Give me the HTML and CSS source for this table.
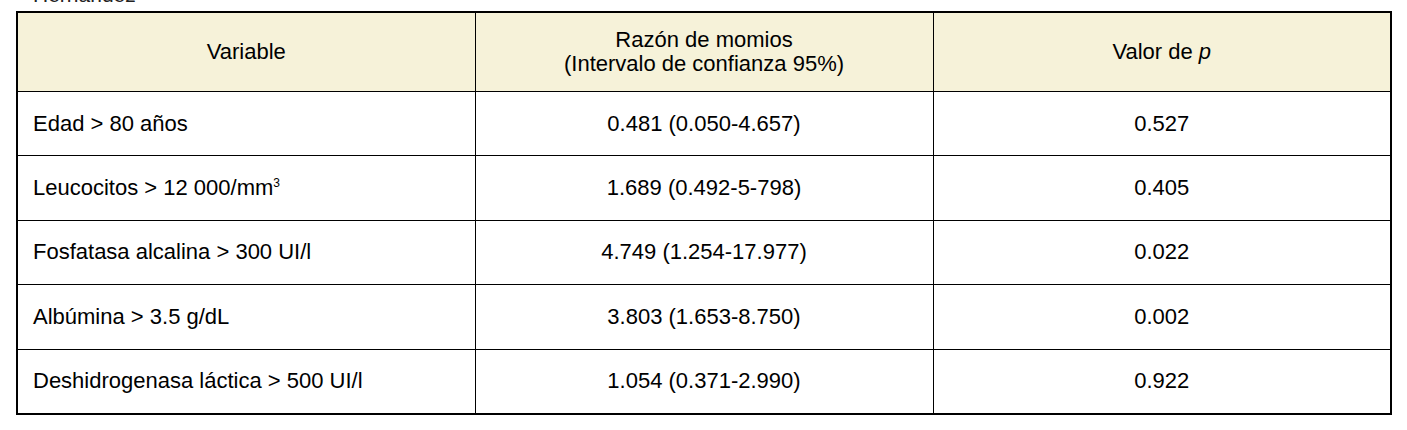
FILE: index.html
```html
<!DOCTYPE html>
<html lang="es">
<head>
<meta charset="utf-8">
<link rel="stylesheet" href="styles.css">
</head>
<body>
<div class="page">
  <div class="caption">Hernández</div>
  <table class="data">
    <thead>
      <tr>
        <th>Variable</th>
        <th>Razón de momios<br>(Intervalo de confianza 95%)</th>
        <th>Valor de <i>p</i></th>
      </tr>
    </thead>
    <tbody>
      <tr><td class="var">Edad &gt; 80 años</td><td>0.481 (0.050-4.657)</td><td>0.527</td></tr>
      <tr><td class="var">Leucocitos &gt; 12 000/mm<sup>3</sup></td><td>1.689 (0.492-5-798)</td><td>0.405</td></tr>
      <tr><td class="var">Fosfatasa alcalina &gt; 300 UI/l</td><td>4.749 (1.254-17.977)</td><td>0.022</td></tr>
      <tr><td class="var">Albúmina &gt; 3.5 g/dL</td><td>3.803 (1.653-8.750)</td><td>0.002</td></tr>
      <tr><td class="var">Deshidrogenasa láctica &gt; 500 UI/l</td><td>1.054 (0.371-2.990)</td><td>0.922</td></tr>
    </tbody>
  </table>
</div>
</body>
</html>
```

FILE: styles.css
```css
html, body {
  margin: 0;
  padding: 0;
  background: #fff;
}
body {
  font-family: "Liberation Sans", Arial, sans-serif;
  color: #000;
}
.page {
  padding: 0 15px 0 16px;
}
.caption {
  font-size: 21px;
  line-height: 22px;
  height: 27px;
  margin-top: -16px;
  padding-left: 17px;
  color: #222;
}
.data {
  width: 1376px;
  border-collapse: collapse;
  table-layout: fixed;
  border: 2px solid #000;
  font-size: 22px;
}
.data th, .data td {
  border: 1px solid #000;
  text-align: center;
  vertical-align: middle;
  padding: 0;
  font-weight: normal;
}
.data thead th {
  background: #f6f2d9;
  height: 78px;
  line-height: 24px;
}
.data tbody td {
  height: 63.4px;
}
.data td.var {
  text-align: left;
  padding-left: 15px;
}
.data sup {
  font-size: 12px;
  line-height: 0;
}
```
